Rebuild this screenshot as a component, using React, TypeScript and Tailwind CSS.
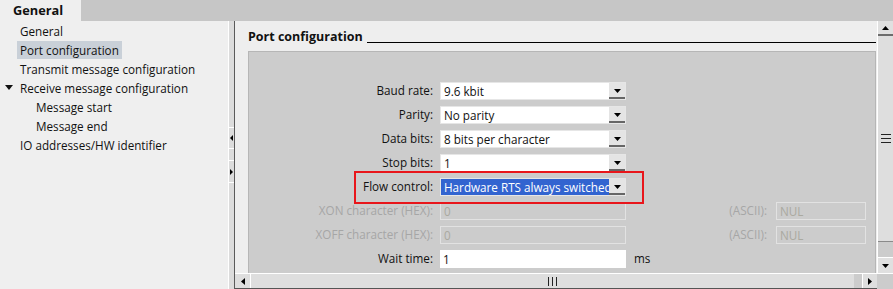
import React from "react";

const navItems = [
  { label: "General", indent: 0 },
  { label: "Port configuration", indent: 0, active: true },
  { label: "Transmit message configuration", indent: 0 },
  { label: "Receive message configuration", indent: 0, expanded: true },
  { label: "Message start", indent: 1 },
  { label: "Message end", indent: 1 },
  { label: "IO addresses/HW identifier", indent: 0 },
];

const DownArrow = () => (
  <svg width="7" height="4" viewBox="0 0 7 4">
    <polygon points="0,0 7,0 3.5,4" fill="#000" />
  </svg>
);

const UpArrow = () => (
  <svg width="7" height="4" viewBox="0 0 7 4">
    <polygon points="0,4 7,4 3.5,0" fill="#000" />
  </svg>
);

const LeftArrow = () => (
  <svg width="4" height="7" viewBox="0 0 4 7">
    <polygon points="4,0 4,7 0,3.5" fill="#000" />
  </svg>
);

const RightArrow = () => (
  <svg width="4" height="7" viewBox="0 0 4 7">
    <polygon points="0,0 0,7 4,3.5" fill="#000" />
  </svg>
);

const Select = ({ value, selected }: { value: string; selected?: boolean }) => (
  <div className="ml-[7px] w-[186px] h-[18px] bg-white flex items-stretch border border-[#e6e6e6]">
    <div
      className={`flex-1 overflow-hidden whitespace-nowrap pl-[3px] leading-[16px] ${
        selected ? "bg-[#3264d0] text-white" : "text-[#111]"
      }`}
    >
      {value}
    </div>
    <div className="w-[16px] bg-[#e4e4e4] border-b-2 border-[#666] flex items-center justify-center pt-[2px]">
      <DownArrow />
    </div>
  </div>
);

const FormRow = ({
  label,
  disabled,
  children,
}: {
  label: string;
  disabled?: boolean;
  children: React.ReactNode;
}) => (
  <div className="h-[24px] flex items-center">
    <div
      className={`w-[184px] text-right whitespace-nowrap ${
        disabled ? "text-[#a6a6a6]" : "text-[#111]"
      }`}
    >
      {label}
    </div>
    {children}
  </div>
);

const DisabledInput = ({ value, className }: { value: string; className: string }) => (
  <div className={`h-[18px] border border-[#e2e2e2] pl-[3px] leading-[16px] text-[#aaa9a0] ${className}`}>
    {value}
  </div>
);

export default function App() {
  return (
    <div className="w-[893px] h-[289px] overflow-hidden flex flex-col bg-[#eeeeee] text-[11.7px] font-['Open_Sans',Arial,sans-serif]">
      {/* Tab bar */}
      <div className="h-[21px] bg-[#c6c6c6] flex">
        <div className="w-[81px] bg-[#efefef] pl-[13px] font-bold text-[12.8px] leading-[21px] text-[#111]">
          General
        </div>
      </div>

      <div className="flex-1 flex min-h-0">
        {/* Left navigation */}
        <div className="w-[228px] bg-[#efefef]">
          {navItems.map((item) => (
            <div key={item.label} className="h-[19px] flex items-center relative">
              {item.expanded && (
                <span className="absolute left-[5px] top-[7px]">
                  <svg width="8" height="5" viewBox="0 0 8 5">
                    <polygon points="0,0 8,0 4,5" fill="#111" />
                  </svg>
                </span>
              )}
              <div
                className={`whitespace-nowrap leading-[18px] px-[3px] text-[#111] ${
                  item.indent ? "ml-[33px]" : "ml-[17px]"
                } ${item.active ? "bg-[#c9d0d8]" : ""}`}
              >
                {item.label}
              </div>
            </div>
          ))}
        </div>

        {/* Splitter */}
        <div className="w-[7px] bg-[#dcdcdc] border-l border-white border-r border-r-[#5a5a5a] flex flex-col pt-[106px]">
          <div className="h-[22px] border-y border-white flex items-center justify-start pl-[1px]">
            <svg width="3" height="6" viewBox="0 0 3 6">
              <polygon points="3,0 3,6 0,3" fill="#000" />
            </svg>
          </div>
          <div className="h-[11px]" />
          <div className="h-[23px] border-y border-white flex items-center justify-start pl-[1px]">
            <svg width="3" height="6" viewBox="0 0 3 6">
              <polygon points="0,0 0,6 3,3" fill="#000" />
            </svg>
          </div>
        </div>

        {/* Content */}
        <div className="flex-1 flex flex-col min-w-0">
          <div className="flex-1 flex min-h-0">
            <div className="flex-1 flex flex-col pl-[13px] pr-[1px] min-w-0">
              <div className="h-[23px] flex items-end">
                <div className="font-bold text-[12.5px] leading-[15px] text-[#111] whitespace-nowrap">
                  Port configuration
                </div>
                <div className="flex-1 h-px bg-black mb-[1px] ml-[4px]" />
              </div>

              <div className="mt-[7px] flex-1 bg-[#cccccc] border-t border-x border-[#b6b6b6] pt-[27px] relative">
                <FormRow label="Baud rate:">
                  <Select value="9.6 kbit" />
                </FormRow>
                <FormRow label="Parity:">
                  <Select value="No parity" />
                </FormRow>
                <FormRow label="Data bits:">
                  <Select value="8 bits per character" />
                </FormRow>
                <FormRow label="Stop bits:">
                  <Select value="1" />
                </FormRow>
                <FormRow label="Flow control:">
                  <Select value="Hardware RTS always switched" selected />
                </FormRow>
                <FormRow label="XON character (HEX):" disabled>
                  <DisabledInput value="0" className="ml-[7px] w-[186px]" />
                  <div className="w-[141px] text-right text-[#a6a6a6]">(ASCII):</div>
                  <DisabledInput value="NUL" className="ml-[9px] w-[90px]" />
                </FormRow>
                <FormRow label="XOFF character (HEX):" disabled>
                  <DisabledInput value="0" className="ml-[7px] w-[186px]" />
                  <div className="w-[141px] text-right text-[#a6a6a6]">(ASCII):</div>
                  <DisabledInput value="NUL" className="ml-[9px] w-[90px]" />
                </FormRow>
                <FormRow label="Wait time:">
                  <div className="ml-[7px] w-[186px] h-[18px] bg-white pl-[3px] leading-[18px] text-[#111]">1</div>
                  <div className="ml-[8px] text-[#111]">ms</div>
                </FormRow>

                {/* Highlight annotation */}
                <div className="absolute left-[105px] top-[119px] w-[290px] h-[33px] border-2 border-[#e8161b]" />
              </div>
            </div>

            {/* Vertical scrollbar */}
            <div className="w-[16px] flex flex-col bg-[#dedede] border-l border-white">
              <div className="h-[15px] bg-[#e0e0e0] border-b-2 border-[#6c6c6c] flex items-center justify-center">
                <UpArrow />
              </div>
              <div className="flex-1 bg-[#dedede] border-b border-[#8a8a8a] flex items-center justify-center">
                <div className="flex flex-col gap-[3px]">
                  <div className="w-[10px] h-px bg-[#222]" />
                  <div className="w-[10px] h-px bg-[#222]" />
                  <div className="w-[10px] h-px bg-[#222]" />
                </div>
              </div>
              <div className="h-[15px] bg-[#cccccc]" />
              <div className="h-[16px] bg-[#e0e0e0] border-t border-white flex items-center justify-center">
                <DownArrow />
              </div>
            </div>
          </div>

          {/* Horizontal scrollbar */}
          <div className="h-[16px] flex border-t border-white">
            <div className="flex-1 flex bg-[#dedede] border-b border-[#555]">
              <div className="w-[16px] border-r border-white flex items-center justify-center">
                <LeftArrow />
              </div>
              <div className="flex-1 flex items-center justify-center gap-[3px]">
                <div className="w-px h-[9px] bg-[#222]" />
                <div className="w-px h-[9px] bg-[#222]" />
                <div className="w-px h-[9px] bg-[#222]" />
              </div>
              <div className="w-[8px] bg-[#cccccc]" />
              <div className="w-[15px] border-l border-white flex items-center justify-center">
                <RightArrow />
              </div>
            </div>
            <div className="w-[16px] bg-[#cccccc]" />
          </div>
        </div>
      </div>
    </div>
  );
}
